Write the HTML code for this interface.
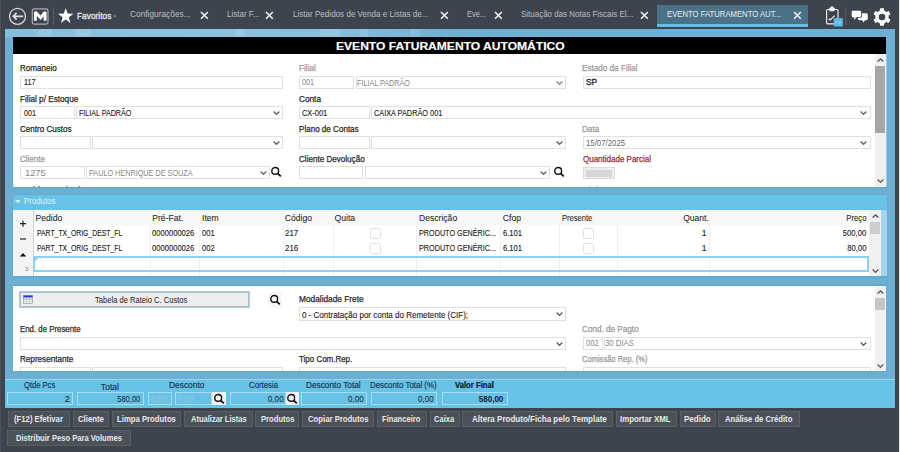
<!DOCTYPE html>
<html><head><meta charset="utf-8"><style>
html,body{margin:0;padding:0;width:900px;height:452px;overflow:hidden;background:#3d444e;}
.a{position:absolute;}
.t{position:absolute;white-space:pre;font-family:"Liberation Sans", sans-serif;}
svg{position:absolute;overflow:visible;}
</style></head><body>
<div class="a" style="left:0px;top:0px;width:900px;height:29px;background:#3d444e;"></div>
<div class="a" style="left:0px;top:0px;width:1px;height:452px;background:#4d5156;"></div>
<div class="a" style="left:899px;top:0px;width:1px;height:452px;background:#e4e4e4;"></div>
<svg style="left:0;top:0" width="60" height="29"><circle cx="17.5" cy="16.3" r="8" fill="none" stroke="#d6d6d6" stroke-width="1.3"/><path d="M13.6 16.3H23.1M16.6 12.9L13.3 16.3L16.6 19.7" fill="none" stroke="#e0e0e0" stroke-width="1.7"/><rect x="32.3" y="8.8" width="15.7" height="15.4" rx="2.2" fill="none" stroke="#a7abb0" stroke-width="1.2"/><path d="M35.4 20.8V12.1L40.6 17.8L45.1 12.1V20.8" fill="none" stroke="#ffffff" stroke-width="2.9" stroke-linejoin="miter" stroke-miterlimit="2"/><rect x="53" y="7.3" width="1" height="17.4" fill="#5d636b"/><path d="M65.7 8.2L67.6 13.6L73.5 13.7L68.8 17.2L70.5 22.9L65.7 19.5L60.9 22.9L62.6 17.2L57.9 13.7L63.8 13.6Z" fill="#ffffff"/><path d="M113 15.6L116.4 15.6L114.7 17.6Z" fill="#8a9098"/></svg>
<div class="t" style="left:76.88px;top:11.00px;font-size:9.5px;line-height:9.5px;color:#e4e4e4;-webkit-text-stroke:0.35px #e4e4e4;transform:scaleX(0.8795);transform-origin:left;">Favoritos</div>
<div class="t" style="left:130.28px;top:9.00px;font-size:9.4px;line-height:9.4px;color:#b9bec5;transform:scaleX(0.8885);transform-origin:left;">Configurações...</div>
<svg style="left:200.6px;top:11.6px" width="6.8" height="6.8"><path d="M0 0L6.8 6.8M6.8 0L0 6.8" stroke="#f0f0f0" stroke-width="1.6"/></svg>
<div class="t" style="left:227.40px;top:9.00px;font-size:9.4px;line-height:9.4px;color:#b9bec5;transform:scaleX(0.8530);transform-origin:left;">Listar F...</div>
<svg style="left:265.6px;top:11.6px" width="6.8" height="6.8"><path d="M0 0L6.8 6.8M6.8 0L0 6.8" stroke="#f0f0f0" stroke-width="1.6"/></svg>
<div class="t" style="left:292.50px;top:9.00px;font-size:9.4px;line-height:9.4px;color:#b9bec5;transform:scaleX(0.8611);transform-origin:left;">Listar Pedidos de Venda e Listas de...</div>
<svg style="left:440.6px;top:11.6px" width="6.8" height="6.8"><path d="M0 0L6.8 6.8M6.8 0L0 6.8" stroke="#f0f0f0" stroke-width="1.6"/></svg>
<div class="t" style="left:467.43px;top:9.00px;font-size:9.4px;line-height:9.4px;color:#b9bec5;transform:scaleX(0.7925);transform-origin:left;">Eve...</div>
<svg style="left:495.20000000000005px;top:11.6px" width="6.8" height="6.8"><path d="M0 0L6.8 6.8M6.8 0L0 6.8" stroke="#f0f0f0" stroke-width="1.6"/></svg>
<div class="t" style="left:521.40px;top:9.00px;font-size:9.4px;line-height:9.4px;color:#b9bec5;transform:scaleX(0.8507);transform-origin:left;">Situação das Notas Fiscais El...</div>
<svg style="left:640.9px;top:11.6px" width="6.8" height="6.8"><path d="M0 0L6.8 6.8M6.8 0L0 6.8" stroke="#f0f0f0" stroke-width="1.6"/></svg>
<div class="a" style="left:657px;top:5px;width:151px;height:22px;background:#4a7287;"></div>
<div class="a" style="left:657px;top:24px;width:151px;height:3px;background:#5dc0ea;"></div>
<div class="t" style="left:667.41px;top:9.00px;font-size:9.4px;line-height:9.4px;color:#e8ecef;transform:scaleX(0.8221);transform-origin:left;">EVENTO FATURAMENTO AUT...</div>
<svg style="left:794.4px;top:11.6px" width="6.8" height="6.8"><path d="M0 0L6.8 6.8M6.8 0L0 6.8" stroke="#f0f0f0" stroke-width="1.6"/></svg>
<svg style="left:820px;top:4px" width="50" height="25"><rect x="6.6" y="5.5" width="11.4" height="14.3" rx="1.3" fill="none" stroke="#f0f0f0" stroke-width="1.15"/><rect x="9.3" y="3.6" width="5.4" height="3.7" rx="1" fill="#f0f0f0"/><circle cx="12" cy="3.5" r="1.2" fill="#f0f0f0"/><path d="M8.7 14.6L10.3 16L14.6 11.6" fill="none" stroke="#f0f0f0" stroke-width="1.25"/><rect x="13.6" y="14.2" width="9.2" height="8.3" fill="#5cbbe8"/><path d="M16.2 17.5V19.5M19.8 17.5V19.5" stroke="#cfeaf8" stroke-width="0.8"/><rect x="25.3" y="3.3" width="1" height="17.5" fill="#5b6169"/><rect x="37.8" y="9.2" width="10" height="7" rx="1.6" fill="#ffffff"/><path d="M42 15.5L43.6 18.4L45.2 15.5Z" fill="#ffffff"/><rect x="31.2" y="6.2" width="10.4" height="7.4" rx="1.7" fill="#ffffff" stroke="#3d444e" stroke-width="0.9"/><path d="M33.4 13.2L34.6 15.6L36.8 13.2Z" fill="#ffffff"/></svg>
<svg style="left:873px;top:7.6px" width="18" height="18" viewBox="-9 -9 18 18"><g fill="#ffffff"><rect x="-2.1" y="-8.7" width="4.2" height="4.5" rx="0.8" transform="rotate(0)"/><rect x="-2.1" y="-8.7" width="4.2" height="4.5" rx="0.8" transform="rotate(60)"/><rect x="-2.1" y="-8.7" width="4.2" height="4.5" rx="0.8" transform="rotate(120)"/><rect x="-2.1" y="-8.7" width="4.2" height="4.5" rx="0.8" transform="rotate(180)"/><rect x="-2.1" y="-8.7" width="4.2" height="4.5" rx="0.8" transform="rotate(240)"/><rect x="-2.1" y="-8.7" width="4.2" height="4.5" rx="0.8" transform="rotate(300)"/><circle r="6.7"/></g><circle r="3.3" fill="#3d444e"/></svg>
<div class="a" style="left:5px;top:29px;width:890px;height:379px;background:#6cafd2;"></div>
<div class="a" style="left:5px;top:29px;width:465px;height:8px;background:linear-gradient(to right,#84bedc 0%,#8cc4df 30%,#86c0dd 70%,#6aafd2 100%);"></div>
<div class="a" style="left:38px;top:29px;width:14px;height:8px;background:rgba(255,255,255,0.12);"></div>
<div class="a" style="left:75px;top:29px;width:15px;height:8px;background:rgba(255,255,255,0.12);"></div>
<div class="a" style="left:235px;top:29px;width:10px;height:8px;background:rgba(255,255,255,0.12);"></div>
<div class="a" style="left:320px;top:29px;width:20px;height:8px;background:rgba(255,255,255,0.12);"></div>
<div class="a" style="left:360px;top:29px;width:8px;height:8px;background:rgba(255,255,255,0.12);"></div>
<div class="a" style="left:410px;top:29px;width:10px;height:8px;background:rgba(255,255,255,0.12);"></div>
<div class="a" style="left:13px;top:37px;width:873px;height:17px;background:#000000;"></div>
<div class="t" style="left:335.90px;top:41.00px;font-size:11.5px;line-height:11.5px;color:#ffffff;font-weight:700;-webkit-text-stroke:0.15px #ffffff;transform:scaleX(1.0495);transform-origin:left;">EVENTO FATURAMENTO AUTOMÁTICO</div>
<div class="a" style="left:13px;top:54px;width:873px;height:133px;background:#ffffff;"></div>
<div class="a" style="left:12px;top:54px;width:1px;height:133px;background:#64a8ca;"></div>
<div class="a" style="left:12px;top:195px;width:1px;height:81px;background:#64a8ca;"></div>
<div class="a" style="left:12px;top:286px;width:1px;height:85px;background:#64a8ca;"></div>
<div class="a" style="left:13px;top:54px;width:1px;height:133px;background:#dff1fa;"></div>
<div class="a" style="left:13px;top:286px;width:1px;height:85px;background:#dff1fa;"></div>
<div class="a" style="left:13px;top:187px;width:874px;height:1px;background:#62a6c8;"></div>
<div class="a" style="left:13px;top:194px;width:874px;height:1px;background:#66aacd;"></div>
<div class="a" style="left:13px;top:276px;width:874px;height:2px;background:#65a9cb;"></div>
<div class="a" style="left:13px;top:284px;width:874px;height:2px;background:#65a9cb;"></div>
<div class="a" style="left:13px;top:371px;width:874px;height:1px;background:#64a8ca;"></div>
<div class="a" style="left:13px;top:195px;width:874px;height:15px;background:#67c2e8;"></div>
<div class="a" style="left:881px;top:210px;width:6px;height:66px;background:#a5d5ee;"></div>
<div class="a" style="left:13px;top:210px;width:868px;height:66px;background:#ffffff;"></div>
<div class="a" style="left:13px;top:286px;width:873px;height:85px;background:#ffffff;"></div>
<div class="a" style="left:875px;top:286px;width:11px;height:85px;background:#f0f0f0;"></div>
<div class="a" style="left:875px;top:298px;width:10px;height:12px;background:#c6c6c6;"></div>
<div class="a" style="left:5px;top:380px;width:890px;height:28px;background:#67c2e8;"></div>
<div class="a" style="left:0;top:0;width:900px;height:187px;overflow:hidden">
<div class="t" style="left:20.10px;top:64.00px;font-size:8.6px;line-height:8.6px;color:#2a2a2a;-webkit-text-stroke:0.25px #2a2a2a;transform:scaleX(0.9355);transform-origin:left;">Romaneio</div>
<div class="a" style="left:20px;top:76px;width:263px;height:13px;background:#ffffff;border:1px solid #e0e0e0;box-sizing:border-box;"></div>
<div class="t" style="left:24.03px;top:78.00px;font-size:8.6px;line-height:8.6px;color:#222;-webkit-text-stroke:0.12px #222;transform:scaleX(0.8529);transform-origin:left;">117</div>
<div class="t" style="left:299.29px;top:64.00px;font-size:8.6px;line-height:8.6px;color:#9a9a9a;-webkit-text-stroke:0.25px #9a9a9a;transform:scaleX(0.9597);transform-origin:left;">Filial</div>
<div class="a" style="left:299px;top:76px;width:55px;height:13px;background:#ffffff;border:1px solid #e0e0e0;box-sizing:border-box;"></div>
<div class="a" style="left:356px;top:76px;width:210px;height:13px;background:#ffffff;border:1px solid #e0e0e0;box-sizing:border-box;"></div>
<svg style="left:555.5px;top:80.5px" width="7" height="4.5"><path d="M0.6 0.6L3.5 3.3L6.4 0.6" fill="none" stroke="#888" stroke-width="1.3"/></svg>
<div class="t" style="left:302.33px;top:78.00px;font-size:8.6px;line-height:8.6px;color:#888;transform:scaleX(0.8495);transform-origin:left;">001</div>
<div class="t" style="left:357.34px;top:79.00px;font-size:8.6px;line-height:8.6px;color:#888;transform:scaleX(0.8387);transform-origin:left;">FILIAL PADRÃO</div>
<div class="t" style="left:582.39px;top:64.00px;font-size:8.6px;line-height:8.6px;color:#9a9a9a;-webkit-text-stroke:0.25px #9a9a9a;transform:scaleX(0.9470);transform-origin:left;">Estado da Filial</div>
<div class="a" style="left:583px;top:76px;width:288px;height:13px;background:#ffffff;border:1px solid #e0e0e0;box-sizing:border-box;"></div>
<div class="t" style="left:586.08px;top:78.00px;font-size:8.6px;line-height:8.6px;color:#222;-webkit-text-stroke:0.3px #222;transform:scaleX(0.9740);transform-origin:left;">SP</div>
<div class="t" style="left:20.09px;top:95.00px;font-size:8.6px;line-height:8.6px;color:#2a2a2a;-webkit-text-stroke:0.25px #2a2a2a;transform:scaleX(0.9526);transform-origin:left;">Filial p/ Estoque</div>
<div class="a" style="left:20px;top:106px;width:55px;height:13px;background:#ffffff;border:1px solid #e0e0e0;box-sizing:border-box;"></div>
<div class="a" style="left:76px;top:106px;width:207px;height:13px;background:#ffffff;border:1px solid #e0e0e0;box-sizing:border-box;"></div>
<svg style="left:272.5px;top:110.5px" width="7" height="4.5"><path d="M0.6 0.6L3.5 3.3L6.4 0.6" fill="none" stroke="#606060" stroke-width="1.3"/></svg>
<div class="t" style="left:23.64px;top:109.00px;font-size:8.6px;line-height:8.6px;color:#222;-webkit-text-stroke:0.12px #222;transform:scaleX(0.8421);transform-origin:left;">001</div>
<div class="t" style="left:78.94px;top:109.00px;font-size:8.6px;line-height:8.6px;color:#222;-webkit-text-stroke:0.12px #222;transform:scaleX(0.8291);transform-origin:left;">FILIAL PADRÃO</div>
<div class="t" style="left:299.29px;top:95.00px;font-size:8.6px;line-height:8.6px;color:#2a2a2a;-webkit-text-stroke:0.25px #2a2a2a;transform:scaleX(0.9573);transform-origin:left;">Conta</div>
<div class="a" style="left:299px;top:106px;width:71px;height:13px;background:#ffffff;border:1px solid #e0e0e0;box-sizing:border-box;"></div>
<div class="a" style="left:371px;top:106px;width:500px;height:13px;background:#ffffff;border:1px solid #e0e0e0;box-sizing:border-box;"></div>
<svg style="left:859.5px;top:110.5px" width="7" height="4.5"><path d="M0.6 0.6L3.5 3.3L6.4 0.6" fill="none" stroke="#606060" stroke-width="1.3"/></svg>
<div class="t" style="left:302.33px;top:109.00px;font-size:8.6px;line-height:8.6px;color:#222;-webkit-text-stroke:0.12px #222;transform:scaleX(0.8646);transform-origin:left;">CX-001</div>
<div class="t" style="left:373.63px;top:109.00px;font-size:8.6px;line-height:8.6px;color:#222;-webkit-text-stroke:0.12px #222;transform:scaleX(0.8526);transform-origin:left;">CAIXA PADRÃO 001</div>
<div class="t" style="left:20.30px;top:125.00px;font-size:8.6px;line-height:8.6px;color:#2a2a2a;-webkit-text-stroke:0.25px #2a2a2a;transform:scaleX(0.9401);transform-origin:left;">Centro Custos</div>
<div class="a" style="left:20px;top:136px;width:71px;height:13px;background:#ffffff;border:1px solid #e0e0e0;box-sizing:border-box;"></div>
<div class="a" style="left:92px;top:136px;width:191px;height:13px;background:#ffffff;border:1px solid #e0e0e0;box-sizing:border-box;"></div>
<svg style="left:272.5px;top:140.5px" width="7" height="4.5"><path d="M0.6 0.6L3.5 3.3L6.4 0.6" fill="none" stroke="#606060" stroke-width="1.3"/></svg>
<div class="t" style="left:298.90px;top:125.00px;font-size:8.6px;line-height:8.6px;color:#2a2a2a;-webkit-text-stroke:0.25px #2a2a2a;transform:scaleX(0.9386);transform-origin:left;">Plano de Contas</div>
<div class="a" style="left:299px;top:136px;width:71px;height:13px;background:#ffffff;border:1px solid #e0e0e0;box-sizing:border-box;"></div>
<div class="a" style="left:371px;top:136px;width:195px;height:13px;background:#ffffff;border:1px solid #e0e0e0;box-sizing:border-box;"></div>
<svg style="left:555.5px;top:140.5px" width="7" height="4.5"><path d="M0.6 0.6L3.5 3.3L6.4 0.6" fill="none" stroke="#606060" stroke-width="1.3"/></svg>
<div class="t" style="left:582.39px;top:125.00px;font-size:8.6px;line-height:8.6px;color:#9a9a9a;-webkit-text-stroke:0.25px #9a9a9a;transform:scaleX(0.9446);transform-origin:left;">Data</div>
<div class="a" style="left:583px;top:136px;width:288px;height:13px;background:#ffffff;border:1px solid #e0e0e0;box-sizing:border-box;"></div>
<svg style="left:859.5px;top:140.5px" width="7" height="4.5"><path d="M0.6 0.6L3.5 3.3L6.4 0.6" fill="none" stroke="#606060" stroke-width="1.3"/></svg>
<div class="t" style="left:586.11px;top:139.00px;font-size:8.6px;line-height:8.6px;color:#666;transform:scaleX(0.9096);transform-origin:left;">15/07/2025</div>
<div class="t" style="left:20.30px;top:155.00px;font-size:8.6px;line-height:8.6px;color:#9a9a9a;-webkit-text-stroke:0.25px #9a9a9a;transform:scaleX(0.9318);transform-origin:left;">Cliente</div>
<div class="a" style="left:20px;top:166px;width:65px;height:13px;background:#ffffff;border:1px solid #e0e0e0;box-sizing:border-box;"></div>
<div class="a" style="left:86px;top:166px;width:184px;height:13px;background:#ffffff;border:1px solid #e0e0e0;box-sizing:border-box;"></div>
<svg style="left:259.5px;top:170.5px" width="7" height="4.5"><path d="M0.6 0.6L3.5 3.3L6.4 0.6" fill="none" stroke="#666" stroke-width="1.3"/></svg>
<div class="t" style="left:24.53px;top:169.00px;font-size:8.6px;line-height:8.6px;color:#888;transform:scaleX(1.0848);transform-origin:left;">1275</div>
<div class="t" style="left:88.94px;top:169.00px;font-size:8.6px;line-height:8.6px;color:#888;transform:scaleX(0.8451);transform-origin:left;">PAULO HENRIQUE DE SOUZA</div>
<svg style="left:271px;top:167px" width="11" height="11"><circle cx="4.2" cy="3.9" r="3.4" fill="none" stroke="#111" stroke-width="1.4"/><path d="M6.6 6.4L9.8 9.4" stroke="#111" stroke-width="1.8"/></svg>
<div class="t" style="left:298.90px;top:155.00px;font-size:8.6px;line-height:8.6px;color:#2a2a2a;-webkit-text-stroke:0.25px #2a2a2a;transform:scaleX(0.9412);transform-origin:left;">Cliente Devolução</div>
<div class="a" style="left:299px;top:166px;width:64px;height:13px;background:#ffffff;border:1px solid #e0e0e0;box-sizing:border-box;"></div>
<div class="a" style="left:365px;top:166px;width:185px;height:13px;background:#ffffff;border:1px solid #e0e0e0;box-sizing:border-box;"></div>
<svg style="left:539.5px;top:170.5px" width="7" height="4.5"><path d="M0.6 0.6L3.5 3.3L6.4 0.6" fill="none" stroke="#666" stroke-width="1.3"/></svg>
<svg style="left:554px;top:167px" width="11" height="11"><circle cx="4.2" cy="3.9" r="3.4" fill="none" stroke="#111" stroke-width="1.4"/><path d="M6.6 6.4L9.8 9.4" stroke="#111" stroke-width="1.8"/></svg>
<div class="t" style="left:582.50px;top:155.00px;font-size:8.6px;line-height:8.6px;color:#9b2a2e;-webkit-text-stroke:0.25px #9b2a2e;transform:scaleX(0.9309);transform-origin:left;">Quantidade Parcial</div>
<div class="a" style="left:583px;top:167px;width:32px;height:12px;background:#efefef;border:1px solid #dcdcdc;box-sizing:border-box;"></div>
<div class="a" style="left:586px;top:169.5px;width:26px;height:7.0px;background:#d6d6d6;"></div>
<div class="t" style="left:21.15px;top:186.00px;font-size:8.6px;line-height:8.6px;color:#2a2a2a;-webkit-text-stroke:0.25px #2a2a2a;transform:scaleX(0.8081);transform-origin:left;">Modelo Doc. Fiscal</div>
<div class="t" style="left:299.52px;top:186.00px;font-size:8.6px;line-height:8.6px;color:#2a2a2a;-webkit-text-stroke:0.25px #2a2a2a;transform:scaleX(0.6526);transform-origin:left;">Entrega</div>
<div class="t" style="left:582.46px;top:186.00px;font-size:8.6px;line-height:8.6px;color:#9a9a9a;-webkit-text-stroke:0.25px #9a9a9a;transform:scaleX(0.7792);transform-origin:left;">Tabela</div>
</div>
<div class="a" style="left:875px;top:54px;width:11px;height:133px;background:#f0f0f0;"></div>
<div class="a" style="left:875px;top:66px;width:10px;height:67px;background:#a6a6a6;"></div>
<div class="a" style="left:886px;top:54px;width:1px;height:133px;background:#8fd0ee;"></div>
<svg style="left:877.0px;top:58.0px" width="7" height="4.5"><path d="M0.6 3.6L3.5 0.9L6.4 3.6" fill="none" stroke="#555" stroke-width="1.3"/></svg>
<svg style="left:877.0px;top:178.5px" width="7" height="4.5"><path d="M0.6 0.6L3.5 3.3L6.4 0.6" fill="none" stroke="#606060" stroke-width="1.3"/></svg>
<svg style="left:15px;top:200px" width="6" height="4"><path d="M0 0H5.7L2.85 3.3Z" fill="#e8f6fc"/></svg>
<div class="t" style="left:23.61px;top:197.00px;font-size:8.6px;line-height:8.6px;color:#dff2fb;transform:scaleX(0.9105);transform-origin:left;">Produtos</div>
<div class="a" style="left:13px;top:210px;width:20px;height:66px;background:#f4f4f4;"></div>
<div class="a" style="left:33px;top:210px;width:1px;height:66px;background:#d4d4d4;"></div>
<div class="a" style="left:34px;top:210px;width:835px;height:15px;background:#f7f7f7;"></div>
<div class="a" style="left:150px;top:225px;width:1px;height:51px;background:#efefef;"></div>
<div class="a" style="left:199px;top:225px;width:1px;height:51px;background:#efefef;"></div>
<div class="a" style="left:283px;top:225px;width:1px;height:51px;background:#efefef;"></div>
<div class="a" style="left:333px;top:225px;width:1px;height:51px;background:#efefef;"></div>
<div class="a" style="left:416px;top:225px;width:1px;height:51px;background:#efefef;"></div>
<div class="a" style="left:500px;top:225px;width:1px;height:51px;background:#efefef;"></div>
<div class="a" style="left:559px;top:225px;width:1px;height:51px;background:#efefef;"></div>
<div class="a" style="left:617px;top:225px;width:1px;height:51px;background:#efefef;"></div>
<div class="a" style="left:709px;top:225px;width:1px;height:51px;background:#efefef;"></div>
<div class="a" style="left:33px;top:256px;width:836px;height:16px;border:2px solid #8ccff0;box-sizing:border-box;"></div>
<svg style="left:35px;top:258px" width="4" height="4"><path d="M0 0H3.5L0 3.5Z" fill="#8ccff0"/></svg>
<div class="a" style="left:869px;top:210px;width:12px;height:66px;background:#f0f0f0;"></div>
<div class="a" style="left:870px;top:222px;width:10px;height:12px;background:#cdcdcd;"></div>
<svg style="left:871.5px;top:214.0px" width="7" height="4.5"><path d="M0.6 3.6L3.5 0.9L6.4 3.6" fill="none" stroke="#555" stroke-width="1.3"/></svg>
<svg style="left:871.5px;top:268.5px" width="7" height="4.5"><path d="M0.6 0.6L3.5 3.3L6.4 0.6" fill="none" stroke="#606060" stroke-width="1.3"/></svg>
<svg style="left:13px;top:210px" width="20" height="66"><path d="M7 13.7H13M10 10.7V16.7" stroke="#222" stroke-width="1.2"/><path d="M7 29H13" stroke="#222" stroke-width="1.2"/><path d="M6.7 46.6L10 43L13.3 46.6Z" fill="#111"/><path d="M12.3 57.2L14 58.6L15.7 57.2M12.3 59.6L14 61L15.7 59.6" fill="none" stroke="#777" stroke-width="0.8"/></svg>
<div class="t" style="left:35.57px;top:214.00px;font-size:8.6px;line-height:8.6px;color:#2a2a2a;-webkit-text-stroke:0.08px #2a2a2a;">Pedido</div>
<div class="t" style="left:152.27px;top:214.00px;font-size:8.6px;line-height:8.6px;color:#2a2a2a;-webkit-text-stroke:0.08px #2a2a2a;">Pré-Fat.</div>
<div class="t" style="left:202.07px;top:214.00px;font-size:8.6px;line-height:8.6px;color:#2a2a2a;-webkit-text-stroke:0.08px #2a2a2a;">Item</div>
<div class="t" style="left:284.87px;top:214.00px;font-size:8.6px;line-height:8.6px;color:#2a2a2a;-webkit-text-stroke:0.08px #2a2a2a;">Código</div>
<div class="t" style="left:334.57px;top:214.00px;font-size:8.6px;line-height:8.6px;color:#2a2a2a;-webkit-text-stroke:0.08px #2a2a2a;">Quita</div>
<div class="t" style="left:418.97px;top:214.00px;font-size:8.6px;line-height:8.6px;color:#2a2a2a;-webkit-text-stroke:0.08px #2a2a2a;">Descrição</div>
<div class="t" style="left:502.87px;top:214.00px;font-size:8.6px;line-height:8.6px;color:#2a2a2a;-webkit-text-stroke:0.08px #2a2a2a;">Cfop</div>
<div class="t" style="left:561.62px;top:214.00px;font-size:8.6px;line-height:8.6px;color:#2a2a2a;-webkit-text-stroke:0.08px #2a2a2a;transform:scaleX(0.8808);transform-origin:left;">Presente</div>
<div class="t" style="left:682.61px;top:214.00px;font-size:8.6px;line-height:8.6px;color:#2a2a2a;-webkit-text-stroke:0.08px #2a2a2a;transform:scaleX(0.9911);transform-origin:right;">Quant.</div>
<div class="t" style="left:844.13px;top:214.00px;font-size:8.6px;line-height:8.6px;color:#2a2a2a;-webkit-text-stroke:0.08px #2a2a2a;transform:scaleX(0.8959);transform-origin:right;">Preço</div>
<div class="t" style="left:36.96px;top:229.00px;font-size:8.6px;line-height:8.6px;color:#222;-webkit-text-stroke:0.12px #222;transform:scaleX(0.7957);transform-origin:left;">PART_TX_ORIG_DEST_FL</div>
<div class="t" style="left:152.32px;top:229.00px;font-size:8.6px;line-height:8.6px;color:#222;-webkit-text-stroke:0.12px #222;transform:scaleX(0.8852);transform-origin:left;">0000000026</div>
<div class="t" style="left:202.12px;top:229.00px;font-size:8.6px;line-height:8.6px;color:#222;-webkit-text-stroke:0.12px #222;transform:scaleX(0.8861);transform-origin:left;">001</div>
<div class="t" style="left:284.91px;top:229.00px;font-size:8.6px;line-height:8.6px;color:#222;-webkit-text-stroke:0.12px #222;transform:scaleX(0.9154);transform-origin:left;">217</div>
<div class="t" style="left:419.04px;top:229.00px;font-size:8.6px;line-height:8.6px;color:#222;-webkit-text-stroke:0.12px #222;transform:scaleX(0.8410);transform-origin:left;">PRODUTO GENÉRIC...</div>
<div class="t" style="left:502.92px;top:229.00px;font-size:8.6px;line-height:8.6px;color:#222;-webkit-text-stroke:0.12px #222;transform:scaleX(0.8882);transform-origin:left;">6.101</div>
<div class="t" style="left:701.85px;top:229.00px;font-size:8.6px;line-height:8.6px;color:#222;-webkit-text-stroke:0.12px #222;">1</div>
<div class="t" style="left:840.09px;top:229.00px;font-size:8.6px;line-height:8.6px;color:#222;-webkit-text-stroke:0.12px #222;transform:scaleX(0.8942);transform-origin:right;">500,00</div>
<div class="a" style="left:370px;top:228px;width:11px;height:11px;background:#ffffff;border:1px solid #e2e2e2;box-sizing:border-box;border-radius:1.5px;"></div>
<div class="a" style="left:583px;top:228px;width:11px;height:11px;background:#ffffff;border:1px solid #e2e2e2;box-sizing:border-box;border-radius:1.5px;"></div>
<div class="t" style="left:36.96px;top:244.00px;font-size:8.6px;line-height:8.6px;color:#222;-webkit-text-stroke:0.12px #222;transform:scaleX(0.7957);transform-origin:left;">PART_TX_ORIG_DEST_FL</div>
<div class="t" style="left:152.32px;top:244.00px;font-size:8.6px;line-height:8.6px;color:#222;-webkit-text-stroke:0.12px #222;transform:scaleX(0.8852);transform-origin:left;">0000000026</div>
<div class="t" style="left:202.12px;top:244.00px;font-size:8.6px;line-height:8.6px;color:#222;-webkit-text-stroke:0.12px #222;transform:scaleX(0.8861);transform-origin:left;">002</div>
<div class="t" style="left:284.91px;top:244.00px;font-size:8.6px;line-height:8.6px;color:#222;-webkit-text-stroke:0.12px #222;transform:scaleX(0.9154);transform-origin:left;">216</div>
<div class="t" style="left:419.04px;top:244.00px;font-size:8.6px;line-height:8.6px;color:#222;-webkit-text-stroke:0.12px #222;transform:scaleX(0.8410);transform-origin:left;">PRODUTO GENÉRIC...</div>
<div class="t" style="left:502.92px;top:244.00px;font-size:8.6px;line-height:8.6px;color:#222;-webkit-text-stroke:0.12px #222;transform:scaleX(0.8882);transform-origin:left;">6.101</div>
<div class="t" style="left:701.85px;top:244.00px;font-size:8.6px;line-height:8.6px;color:#222;-webkit-text-stroke:0.12px #222;">1</div>
<div class="t" style="left:844.87px;top:244.00px;font-size:8.6px;line-height:8.6px;color:#222;-webkit-text-stroke:0.12px #222;transform:scaleX(0.8930);transform-origin:right;">80,00</div>
<div class="a" style="left:370px;top:243px;width:11px;height:11px;background:#ffffff;border:1px solid #e2e2e2;box-sizing:border-box;border-radius:1.5px;"></div>
<div class="a" style="left:583px;top:243px;width:11px;height:11px;background:#ffffff;border:1px solid #e2e2e2;box-sizing:border-box;border-radius:1.5px;"></div>
<div class="a" style="left:0;top:286px;width:900px;height:85px;overflow:hidden"><div class="a" style="left:0;top:-286px;width:900px;height:452px">
<div class="a" style="left:19px;top:291px;width:231px;height:17px;background:#9fd2f0;"></div>
<div class="a" style="left:20px;top:292px;width:229px;height:15px;background:#eeeeee;border:1px solid #b9b9b9;box-sizing:border-box;"></div>
<svg style="left:23px;top:295px" width="10" height="9"><rect x="0.5" y="0.5" width="9" height="8" fill="#f4f4f4" stroke="#8a8a8a" stroke-width="0.6"/><rect x="0.5" y="0.5" width="9" height="2" fill="#2a3ad0"/><path d="M0.5 4.2H9.5" stroke="#49c0b0" stroke-width="0.8"/><path d="M0.5 6.4H9.5M3.5 2.5V8.5M6.5 2.5V8.5" stroke="#bdbdbd" stroke-width="0.5"/></svg>
<div class="t" style="left:94.62px;top:296.00px;font-size:8.6px;line-height:8.6px;color:#1a1a1a;transform:scaleX(0.8823);transform-origin:left;">Tabela de Rateio C. Custos</div>
<div class="a" style="left:268px;top:292px;width:14px;height:15px;background:#f7f7f7;"></div>
<svg style="left:270px;top:295px" width="11" height="11"><circle cx="4.2" cy="3.9" r="3.4" fill="none" stroke="#111" stroke-width="1.4"/><path d="M6.6 6.4L9.8 9.4" stroke="#111" stroke-width="1.8"/></svg>
<div class="t" style="left:299.18px;top:295.00px;font-size:8.6px;line-height:8.6px;color:#2a2a2a;-webkit-text-stroke:0.25px #2a2a2a;transform:scaleX(0.9667);transform-origin:left;">Modalidade Frete</div>
<div class="a" style="left:299px;top:307px;width:267px;height:14px;background:#ffffff;border:1px solid #e0e0e0;box-sizing:border-box;"></div>
<svg style="left:555.5px;top:312px" width="7" height="4.5"><path d="M0.6 0.6L3.5 3.3L6.4 0.6" fill="none" stroke="#606060" stroke-width="1.3"/></svg>
<div class="t" style="left:301.60px;top:311.00px;font-size:8.6px;line-height:8.6px;color:#222;-webkit-text-stroke:0.12px #222;transform:scaleX(0.9319);transform-origin:left;">0 - Contratação por conta do Remetente (CIF);</div>
<div class="t" style="left:20.31px;top:325.00px;font-size:8.6px;line-height:8.6px;color:#2a2a2a;-webkit-text-stroke:0.25px #2a2a2a;transform:scaleX(0.9128);transform-origin:left;">End. de Presente</div>
<div class="a" style="left:20px;top:337px;width:546px;height:13px;background:#ffffff;border:1px solid #e0e0e0;box-sizing:border-box;"></div>
<svg style="left:555.5px;top:341.5px" width="7" height="4.5"><path d="M0.6 0.6L3.5 3.3L6.4 0.6" fill="none" stroke="#606060" stroke-width="1.3"/></svg>
<div class="t" style="left:582.39px;top:325.00px;font-size:8.6px;line-height:8.6px;color:#9a9a9a;-webkit-text-stroke:0.25px #9a9a9a;transform:scaleX(0.9467);transform-origin:left;">Cond. de Pagto</div>
<div class="a" style="left:583px;top:337px;width:20px;height:13px;background:#ffffff;border:1px solid #e0e0e0;box-sizing:border-box;"></div>
<div class="a" style="left:604px;top:337px;width:267px;height:13px;background:#ffffff;border:1px solid #e0e0e0;box-sizing:border-box;"></div>
<svg style="left:859.5px;top:341.5px" width="7" height="4.5"><path d="M0.6 0.6L3.5 3.3L6.4 0.6" fill="none" stroke="#606060" stroke-width="1.3"/></svg>
<div class="t" style="left:585.62px;top:339.00px;font-size:8.6px;line-height:8.6px;color:#888;transform:scaleX(0.8934);transform-origin:left;">002</div>
<div class="t" style="left:605.21px;top:339.00px;font-size:8.6px;line-height:8.6px;color:#888;transform:scaleX(0.9065);transform-origin:left;">30 DIAS</div>
<div class="t" style="left:20.29px;top:355.00px;font-size:8.6px;line-height:8.6px;color:#2a2a2a;-webkit-text-stroke:0.25px #2a2a2a;transform:scaleX(0.9443);transform-origin:left;">Representante</div>
<div class="a" style="left:20px;top:367px;width:71px;height:13px;background:#ffffff;border:1px solid #e0e0e0;box-sizing:border-box;"></div>
<div class="a" style="left:92px;top:367px;width:191px;height:13px;background:#ffffff;border:1px solid #e0e0e0;box-sizing:border-box;"></div>
<div class="t" style="left:299.20px;top:355.00px;font-size:8.6px;line-height:8.6px;color:#2a2a2a;-webkit-text-stroke:0.25px #2a2a2a;transform:scaleX(0.9261);transform-origin:left;">Tipo Com.Rep.</div>
<div class="a" style="left:299px;top:367px;width:267px;height:13px;background:#ffffff;border:1px solid #e0e0e0;box-sizing:border-box;"></div>
<div class="t" style="left:582.42px;top:355.00px;font-size:8.6px;line-height:8.6px;color:#9a9a9a;-webkit-text-stroke:0.25px #9a9a9a;transform:scaleX(0.8779);transform-origin:left;">Comissão Rep. (%)</div>
<div class="a" style="left:583px;top:367px;width:288px;height:13px;background:#ffffff;border:1px solid #e0e0e0;box-sizing:border-box;"></div>
</div></div>
<svg style="left:877.0px;top:290.0px" width="7" height="4.5"><path d="M0.6 3.6L3.5 0.9L6.4 3.6" fill="none" stroke="#555" stroke-width="1.3"/></svg>
<div class="a" style="left:875px;top:298px;width:10px;height:12px;background:#c6c6c6;"></div>
<svg style="left:877.0px;top:363.5px" width="7" height="4.5"><path d="M0.6 0.6L3.5 3.3L6.4 0.6" fill="none" stroke="#606060" stroke-width="1.3"/></svg>
<div class="a" style="left:5px;top:379px;width:890px;height:1px;background:#9ed3ea;"></div>
<div class="t" style="left:24.12px;top:381.00px;font-size:8.6px;line-height:8.6px;color:#173447;-webkit-text-stroke:0.15px #173447;transform:scaleX(0.8826);transform-origin:left;">Qtde Pcs</div>
<div class="t" style="left:100.87px;top:383.00px;font-size:8.6px;line-height:8.6px;color:#173447;-webkit-text-stroke:0.15px #173447;">Total</div>
<div class="t" style="left:168.88px;top:381.00px;font-size:8.6px;line-height:8.6px;color:#173447;-webkit-text-stroke:0.15px #173447;transform:scaleX(0.9740);transform-origin:left;">Desconto</div>
<div class="t" style="left:248.91px;top:381.00px;font-size:8.6px;line-height:8.6px;color:#173447;-webkit-text-stroke:0.15px #173447;transform:scaleX(0.9070);transform-origin:left;">Cortesia</div>
<div class="t" style="left:306.29px;top:381.00px;font-size:8.6px;line-height:8.6px;color:#173447;-webkit-text-stroke:0.15px #173447;transform:scaleX(0.9640);transform-origin:left;">Desconto Total</div>
<div class="t" style="left:370.30px;top:381.00px;font-size:8.6px;line-height:8.6px;color:#173447;-webkit-text-stroke:0.15px #173447;transform:scaleX(0.9197);transform-origin:left;">Desconto Total (%)</div>
<div class="t" style="left:454.62px;top:381.00px;font-size:8.6px;line-height:8.6px;color:#0c1c28;font-weight:700;-webkit-text-stroke:0.2px #0c1c28;transform:scaleX(0.8953);transform-origin:left;">Valor Final</div>
<div class="a" style="left:7px;top:392px;width:66px;height:13px;border:1px solid #a9dcf1;box-sizing:border-box;"></div>
<div class="t" style="left:64.97px;top:395.00px;font-size:8.6px;line-height:8.6px;color:#10222e;transform:scaleX(1.0505);transform-origin:right;">2</div>
<div class="a" style="left:77px;top:392px;width:67px;height:13px;border:1px solid #a9dcf1;box-sizing:border-box;"></div>
<div class="t" style="left:113.88px;top:395.00px;font-size:8.6px;line-height:8.6px;color:#10222e;transform:scaleX(0.8786);transform-origin:right;">580,00</div>
<div class="a" style="left:148px;top:392px;width:24px;height:13px;border:1px solid #a9dcf1;box-sizing:border-box;"></div>
<div class="t" style="left:150.60px;top:395.00px;font-size:8.6px;line-height:8.6px;color:#9cc8dc;transform:scaleX(0.9348);transform-origin:left;">0,00</div>
<div class="a" style="left:175px;top:392px;width:37px;height:13px;border:1px solid #a9dcf1;box-sizing:border-box;"></div>
<div class="t" style="left:177.90px;top:395.00px;font-size:8.6px;line-height:8.6px;color:#9cc8dc;transform:scaleX(0.9348);transform-origin:left;">0,00</div>
<div class="a" style="left:212px;top:392px;width:14px;height:13px;background:#f2f2f2;"></div>
<svg style="left:213.5px;top:393.5px" width="11" height="11"><circle cx="4.2" cy="3.9" r="3.4" fill="none" stroke="#111" stroke-width="1.4"/><path d="M6.6 6.4L9.8 9.4" stroke="#111" stroke-width="1.8"/></svg>
<div class="a" style="left:230px;top:392px;width:56px;height:13px;border:1px solid #a9dcf1;box-sizing:border-box;"></div>
<div class="t" style="left:266.68px;top:395.00px;font-size:8.6px;line-height:8.6px;color:#10222e;transform:scaleX(0.9535);transform-origin:right;">0,00</div>
<div class="a" style="left:286px;top:392px;width:13px;height:13px;background:#f2f2f2;"></div>
<svg style="left:287px;top:393.5px" width="11" height="11"><circle cx="4.2" cy="3.9" r="3.4" fill="none" stroke="#111" stroke-width="1.4"/><path d="M6.6 6.4L9.8 9.4" stroke="#111" stroke-width="1.8"/></svg>
<div class="a" style="left:301px;top:392px;width:66px;height:13px;border:1px solid #a9dcf1;box-sizing:border-box;"></div>
<div class="t" style="left:346.97px;top:395.00px;font-size:8.6px;line-height:8.6px;color:#10222e;transform:scaleX(0.9348);transform-origin:right;">0,00</div>
<div class="a" style="left:371px;top:392px;width:66px;height:13px;border:1px solid #a9dcf1;box-sizing:border-box;"></div>
<div class="t" style="left:416.67px;top:395.00px;font-size:8.6px;line-height:8.6px;color:#10222e;transform:scaleX(0.9348);transform-origin:right;">0,00</div>
<div class="a" style="left:442px;top:392px;width:66px;height:13px;border:1px solid #a9dcf1;box-sizing:border-box;"></div>
<div class="t" style="left:477.40px;top:395.00px;font-size:8.6px;line-height:8.6px;color:#10222e;font-weight:700;transform:scaleX(0.9294);transform-origin:right;">580,00</div>
<div class="a" style="left:8px;top:411px;width:62px;height:16px;background:#4c5159;border:1px solid #5a5f66;box-sizing:border-box;"></div>
<div class="t" style="left:14.31px;top:415.00px;font-size:8.4px;line-height:8.4px;color:#e6e9ec;font-weight:700;transform:scaleX(0.9219);transform-origin:left;">(F12) Efetivar</div>
<div class="a" style="left:73px;top:411px;width:36px;height:16px;background:#4c5159;border:1px solid #5a5f66;box-sizing:border-box;"></div>
<div class="t" style="left:77.61px;top:415.00px;font-size:8.4px;line-height:8.4px;color:#e6e9ec;font-weight:700;transform:scaleX(0.9279);transform-origin:left;">Cliente</div>
<div class="a" style="left:112px;top:411px;width:69px;height:16px;background:#4c5159;border:1px solid #5a5f66;box-sizing:border-box;"></div>
<div class="t" style="left:117.11px;top:415.00px;font-size:8.4px;line-height:8.4px;color:#e6e9ec;font-weight:700;transform:scaleX(0.9243);transform-origin:left;">Limpa Produtos</div>
<div class="a" style="left:184px;top:411px;width:69px;height:16px;background:#4c5159;border:1px solid #5a5f66;box-sizing:border-box;"></div>
<div class="t" style="left:190.92px;top:415.00px;font-size:8.4px;line-height:8.4px;color:#e6e9ec;font-weight:700;transform:scaleX(0.8982);transform-origin:left;">Atualizar Listas</div>
<div class="a" style="left:255px;top:411px;width:44px;height:16px;background:#4c5159;border:1px solid #5a5f66;box-sizing:border-box;"></div>
<div class="t" style="left:260.92px;top:415.00px;font-size:8.4px;line-height:8.4px;color:#e6e9ec;font-weight:700;transform:scaleX(0.9115);transform-origin:left;">Produtos</div>
<div class="a" style="left:302px;top:411px;width:72px;height:16px;background:#4c5159;border:1px solid #5a5f66;box-sizing:border-box;"></div>
<div class="t" style="left:307.61px;top:415.00px;font-size:8.4px;line-height:8.4px;color:#e6e9ec;font-weight:700;transform:scaleX(0.9240);transform-origin:left;">Copiar Produtos</div>
<div class="a" style="left:377px;top:411px;width:50px;height:16px;background:#4c5159;border:1px solid #5a5f66;box-sizing:border-box;"></div>
<div class="t" style="left:382.12px;top:415.00px;font-size:8.4px;line-height:8.4px;color:#e6e9ec;font-weight:700;transform:scaleX(0.9067);transform-origin:left;">Financeiro</div>
<div class="a" style="left:430px;top:411px;width:30px;height:16px;background:#4c5159;border:1px solid #5a5f66;box-sizing:border-box;"></div>
<div class="t" style="left:434.32px;top:415.00px;font-size:8.4px;line-height:8.4px;color:#e6e9ec;font-weight:700;transform:scaleX(0.8991);transform-origin:left;">Caixa</div>
<div class="a" style="left:462px;top:411px;width:151px;height:16px;background:#4c5159;border:1px solid #5a5f66;box-sizing:border-box;"></div>
<div class="t" style="left:472.10px;top:415.00px;font-size:8.4px;line-height:8.4px;color:#e6e9ec;font-weight:700;transform:scaleX(0.9605);transform-origin:left;">Altera Produto/Ficha pelo Template</div>
<div class="a" style="left:616px;top:411px;width:61px;height:16px;background:#4c5159;border:1px solid #5a5f66;box-sizing:border-box;"></div>
<div class="t" style="left:620.41px;top:415.00px;font-size:8.4px;line-height:8.4px;color:#e6e9ec;font-weight:700;transform:scaleX(0.9379);transform-origin:left;">Importar XML</div>
<div class="a" style="left:680px;top:411px;width:36px;height:16px;background:#4c5159;border:1px solid #5a5f66;box-sizing:border-box;"></div>
<div class="t" style="left:684.30px;top:415.00px;font-size:8.4px;line-height:8.4px;color:#e6e9ec;font-weight:700;transform:scaleX(0.9578);transform-origin:left;">Pedido</div>
<div class="a" style="left:718px;top:411px;width:82px;height:16px;background:#4c5159;border:1px solid #5a5f66;box-sizing:border-box;"></div>
<div class="t" style="left:724.92px;top:415.00px;font-size:8.4px;line-height:8.4px;color:#e6e9ec;font-weight:700;transform:scaleX(0.9155);transform-origin:left;">Análise de Crédito</div>
<div class="a" style="left:7px;top:429.5px;width:124px;height:16.0px;background:#4c5159;border:1px solid #5a5f66;box-sizing:border-box;"></div>
<div class="t" style="left:16.32px;top:434.00px;font-size:8.4px;line-height:8.4px;color:#e6e9ec;font-weight:700;transform:scaleX(0.9078);transform-origin:left;">Distribuir Peso Para Volumes</div>
</body></html>
